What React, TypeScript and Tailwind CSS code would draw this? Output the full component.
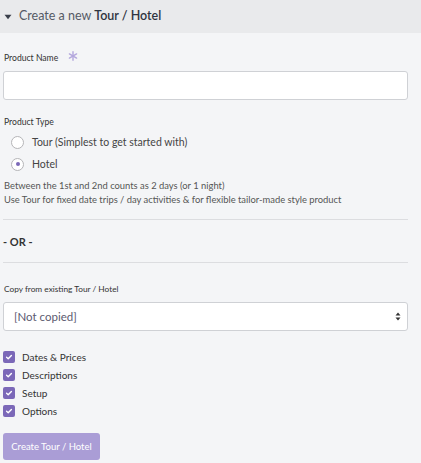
import React from "react";

function Check() {
  return (
    <span className="flex h-[12px] w-[12px] items-center justify-center rounded-[2px] bg-[#7b68b8]">
      <svg width="8" height="8" viewBox="0 0 8 8" fill="none">
        <path d="M1.6 4.3 L3.2 5.7 L6.4 2.4" stroke="white" strokeWidth="1.4" strokeLinecap="round" strokeLinejoin="round" />
      </svg>
    </span>
  );
}

function Radio({ checked, label }: { checked?: boolean; label: string }) {
  return (
    <div className="flex h-[16px] items-center gap-[8px] pl-[8px]">
      <span className="flex h-[13px] w-[13px] items-center justify-center rounded-full border border-[#b5b5b8] bg-white">
        {checked && <span className="h-[4px] w-[4px] rounded-full bg-[#7b68b8]" />}
      </span>
      <span className="text-[10.5px] leading-none text-[#444]">{label}</span>
    </div>
  );
}

export default function App() {
  const checks = ["Dates & Prices", "Descriptions", "Setup", "Options"];
  return (
    <div className="h-[463px] w-[421px] overflow-hidden bg-[#f4f5f7] text-[#333]" style={{ fontFamily: "Lato, 'Noto Sans', sans-serif" }}>
      <div className="flex h-[33px] items-center bg-[#e9eaec] pl-[4px]">
        <svg width="8" height="6" viewBox="0 0 8 6" className="mr-[7px]">
          <path d="M0.5 0.8 L7.5 0.8 L4 5.2 Z" fill="#3a3f4a" />
        </svg>
        <span className="text-[12.5px] leading-none text-[#555a66]">
          Create a new <span className="font-semibold text-[#2f3440]">Tour / Hotel</span>
        </span>
      </div>
      <div className="w-[408px] pl-[3px]">
        <div className="mt-[19px] flex h-[12px] items-center pl-[1px]">
          <span className="text-[8.6px] leading-none text-[#333]">Product Name</span>
          <svg width="10" height="10" viewBox="0 0 10 10" className="ml-[10px] -mt-[4px]">
            <g stroke="#b3a7dd" strokeWidth="1.4" strokeLinecap="round">
              <path d="M5 0.8 L5 9.2" />
              <path d="M1.4 2.9 L8.6 7.1" />
              <path d="M1.4 7.1 L8.6 2.9" />
            </g>
          </svg>
        </div>
        <div className="mt-[7px] h-[29px] rounded-[3px] border border-[#cfd1d5] bg-white" />
        <div className="mt-[16px] flex h-[12px] items-center pl-[1px] text-[8.6px] leading-none text-[#333]">Product Type</div>
        <div className="mt-[6px] flex flex-col gap-[6px]">
          <Radio label="Tour (Simplest to get started with)" />
          <Radio checked label="Hotel" />
        </div>
        <div className="mt-[7px] pl-[1px] text-[9.4px] leading-[14px] text-[#555]">
          <div>Between the 1st and 2nd counts as 2 days (or 1 night)</div>
          <div>Use Tour for fixed date trips / day activities &amp; for flexible tailor-made style product</div>
        </div>
        <div className="mt-[12px] border-t border-[#dcdde0]" />
        <div className="mt-[14px] flex h-[14px] items-center text-[11px] font-bold leading-none text-[#333]">- OR -</div>
        <div className="mt-[14px] border-t border-[#dcdde0]" />
        <div className="mt-[20px] flex h-[12px] items-center pl-[1px] text-[8.3px] leading-none text-[#333]">Copy from existing Tour / Hotel</div>
        <div className="mt-[7px] flex h-[29px] items-center justify-between rounded-[3px] border border-[#cfd1d5] bg-white pl-[10px] pr-[6px]">
          <span className="text-[11.5px] leading-none text-[#5c5a70]">[Not copied]</span>
          <svg width="6" height="9" viewBox="0 0 6 9">
            <path d="M3 0.5 L5.5 3.5 L0.5 3.5 Z M3 8.5 L5.5 5.5 L0.5 5.5 Z" fill="#333" />
          </svg>
        </div>
        <div className="mt-[20px] flex flex-col gap-[6px]">
          {checks.map((c) => (
            <div key={c} className="flex h-[12px] items-center gap-[7px]">
              <Check />
              <span className="text-[10px] leading-none text-[#333]">{c}</span>
            </div>
          ))}
        </div>
        <button className="mt-[16px] flex h-[27px] w-[97px] items-center justify-center rounded-[3px] bg-[#aa9dd6] text-[9.5px] leading-none text-white">
          Create Tour / Hotel
        </button>
      </div>
    </div>
  );
}
